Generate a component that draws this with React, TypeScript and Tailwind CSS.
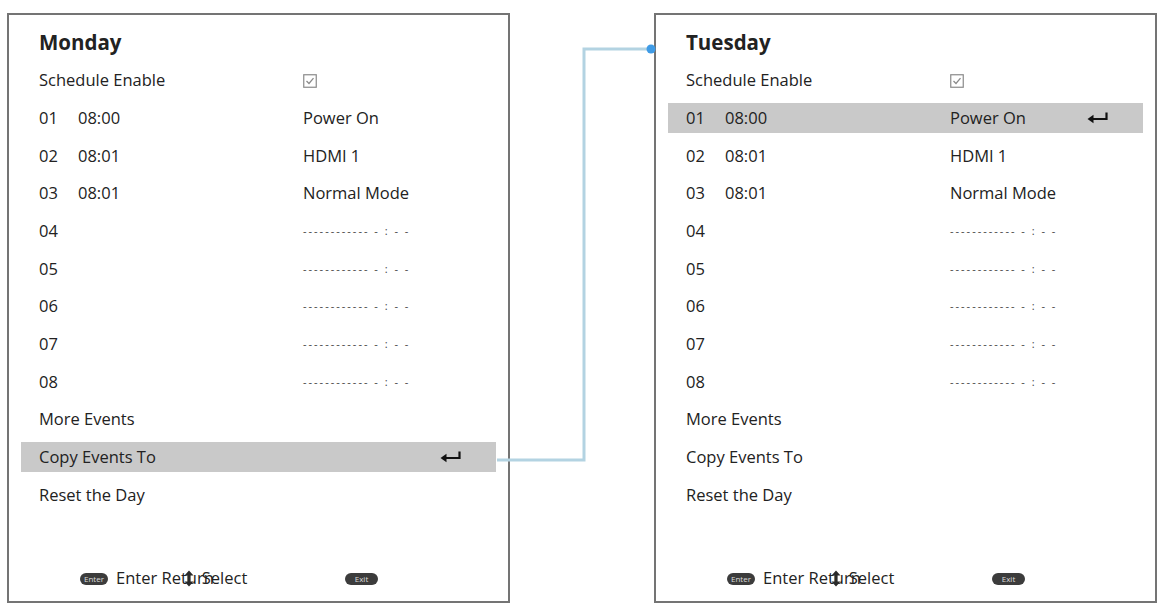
import React from 'react';

type Row = { no: string; time?: string; value?: string };

const font = { fontFamily: "'Open Sans', 'Noto Sans', sans-serif" };

function EnterArrow() {
  return (
    <svg width="22" height="12" viewBox="0 0 22 12" className="shrink-0">
      <path d="M19.5 0.5 V7 H5" fill="none" stroke="#111" strokeWidth="2.2" />
      <path d="M0.5 7 L6.5 2.8 V11.2 Z" fill="#111" />
    </svg>
  );
}

function UpDown() {
  return (
    <svg width="10" height="17" viewBox="0 0 10 17" className="shrink-0">
      <path d="M5 0.5 L9.5 5.5 H6.6 V11.5 H9.5 L5 16.5 L0.5 11.5 H3.4 V5.5 H0.5 Z" fill="#2a2a2a" />
    </svg>
  );
}

function CheckBox() {
  return (
    <svg width="14" height="14" viewBox="0 0 14 14">
      <rect x="0.75" y="0.75" width="12.5" height="12.5" fill="none" stroke="#8a8a8a" strokeWidth="1.2" />
      <path d="M3.5 7 L6 9.5 L10.5 4.2" fill="none" stroke="#8a8a8a" strokeWidth="1.3" />
    </svg>
  );
}

function Pill({ text, w }: { text: string; w: string }) {
  return (
    <span className={`inline-flex items-center justify-center h-[12px] ${w} rounded-full bg-[#3c3c3c] text-[#ddd] text-[8px] leading-none`}>
      {text}
    </span>
  );
}

const events: Row[] = [
  { no: '01', time: '08:00', value: 'Power On' },
  { no: '02', time: '08:01', value: 'HDMI 1' },
  { no: '03', time: '08:01', value: 'Normal Mode' },
  { no: '04' },
  { no: '05' },
  { no: '06' },
  { no: '07' },
  { no: '08' },
];

const menu = ['More Events', 'Copy Events To', 'Reset the Day'];

function Line({ active, children }: { active?: boolean; children: React.ReactNode }) {
  return (
    <div className="h-[37.7px] mx-[12px] flex items-center">
      <div className={`h-[30px] w-full pl-[18px] pr-[34px] flex items-center text-[16.5px] ${active ? 'bg-[#c9c9c9]' : ''}`}>
        {children}
        {active && (
          <span className="ml-auto">
            <EnterArrow />
          </span>
        )}
      </div>
    </div>
  );
}

function DayPanel({ day, activeEvent, activeMenu }: { day: string; activeEvent?: number; activeMenu?: number }) {
  return (
    <div className="w-[503px] h-[590px] border-2 border-[#747474] bg-white flex flex-col pt-[9px] text-[#222]" style={font}>
      <div className="h-[37.7px] flex items-center px-[30px] text-[20.5px] font-bold">{day}</div>

      <Line>
        <span className="w-[264px]">Schedule Enable</span>
        <CheckBox />
      </Line>

      {events.map((e, i) => (
        <Line key={e.no} active={activeEvent === i}>
          <span className="w-[39px]">{e.no}</span>
          <span className="w-[225px]">{e.time}</span>
          {e.value ? (
            <span>{e.value}</span>
          ) : (
            <span className="text-[11px] text-[#444] tracking-[2px]">------------ - : - -</span>
          )}
        </Line>
      ))}

      {menu.map((m, i) => (
        <Line key={m} active={activeMenu === i}>
          <span>{m}</span>
        </Line>
      ))}

      {/* key hints along the bottom edge */}
      <div className="mt-auto mb-[10px] pl-[71px] flex items-center text-[16.5px] text-[#222]">
        <div className="w-[265px] flex items-center">
          <Pill text="Enter" w="w-[28px]" />
          <span className="ml-[8px]">Enter Return</span>
          <span className="-ml-[30px]">
            <UpDown />
          </span>
          <span className="ml-[8px]">Select</span>
        </div>
        <Pill text="Exit" w="w-[33px]" />
      </div>
    </div>
  );
}

export default function App() {
  return (
    <div className="relative w-[1162px] h-[606px] bg-white overflow-hidden">
      <div className="flex gap-[144px] pt-[13px] pl-[7px]">
        <DayPanel day="Monday" activeMenu={1} />
        <DayPanel day="Tuesday" activeEvent={0} />
      </div>

      {/* link from "Copy Events To" over to the next day */}
      <svg className="absolute inset-0 pointer-events-none" width="1162" height="606">
        <path d="M497 460 H584 V49 H650" fill="none" stroke="#b3d3e2" strokeWidth="3" />
        <circle cx="651" cy="49" r="4.5" fill="#3f9be6" />
      </svg>
    </div>
  );
}
